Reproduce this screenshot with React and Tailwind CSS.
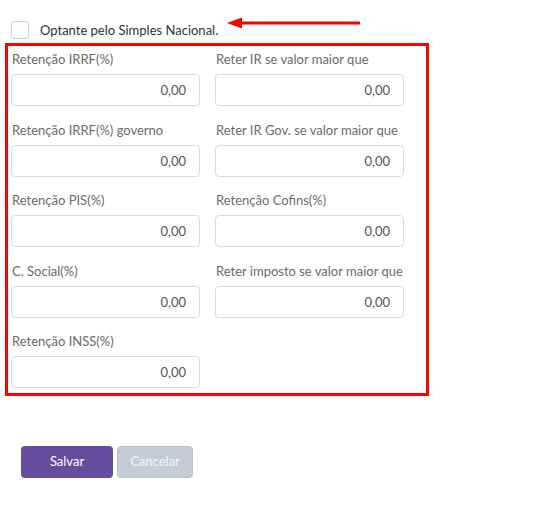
import { useState } from 'react'

const fields = [
  'Retenção IRRF(%)',
  'Reter IR se valor maior que',
  'Retenção IRRF(%) governo',
  'Reter IR Gov. se valor maior que',
  'Retenção PIS(%)',
  'Retenção Cofins(%)',
  'C. Social(%)',
  'Reter imposto se valor maior que',
  'Retenção INSS(%)',
]

function Field({ label }) {
  return (
    <div className="flex flex-col">
      <label className="h-4 ml-[1px] mb-[7px] text-[13px] leading-4 text-[#6b6b6b]">{label}</label>
      <input
        defaultValue="0,00"
        className="h-[32px] w-[189px] rounded-[4px] border border-[#dcdcdc] bg-white px-[13px] text-right text-[13px] text-[#555] outline-none"
      />
    </div>
  )
}

export default function App() {
  const [checked, setChecked] = useState(false)

  return (
    <div className="min-h-screen w-[548px] bg-white pt-[21px] font-['Lato','Liberation_Sans',sans-serif]">
      {/* optante */}
      <div className="flex h-[18px] items-center pl-[11px]">
        <button
          onClick={() => setChecked(!checked)}
          className="h-[18px] w-[18px] shrink-0 rounded-[3px] border border-[#cfcfcf] bg-white"
        />
        <span className="ml-[11px] text-[13px] leading-[18px] text-[#333]">Optante pelo Simples Nacional.</span>
        <svg width="135" height="14" viewBox="0 0 135 14" className="ml-[9px] self-start -mt-[5px]">
          <line x1="12" y1="7" x2="133" y2="7" stroke="#ff0000" strokeWidth="3" />
          <polygon points="0,7 15,1.5 15,12.5" fill="#ff0000" />
        </svg>
      </div>

      {/* retencoes */}
      <div className="ml-[5px] mt-[4px] w-[424px] border-[3px] border-[#ff0000] pl-[3px] pt-[5px] pb-[5px]">
        <div className="grid grid-cols-[189px_189px] gap-x-[15px] gap-y-[15.5px]">
          {fields.map((f) => (
            <Field key={f} label={f} />
          ))}
        </div>
      </div>

      <div className="mt-[50px] flex gap-[4px] pl-[21px]">
        <button className="h-[32px] w-[92px] rounded-[4px] bg-[#664d9e] text-[13px] text-white">Salvar</button>
        <button className="h-[32px] w-[76px] rounded-[4px] border border-[#bcc0cb] bg-[#c7cbd5] text-[13px] text-[#f4f5f7]">
          Cancelar
        </button>
      </div>
    </div>
  )
}
